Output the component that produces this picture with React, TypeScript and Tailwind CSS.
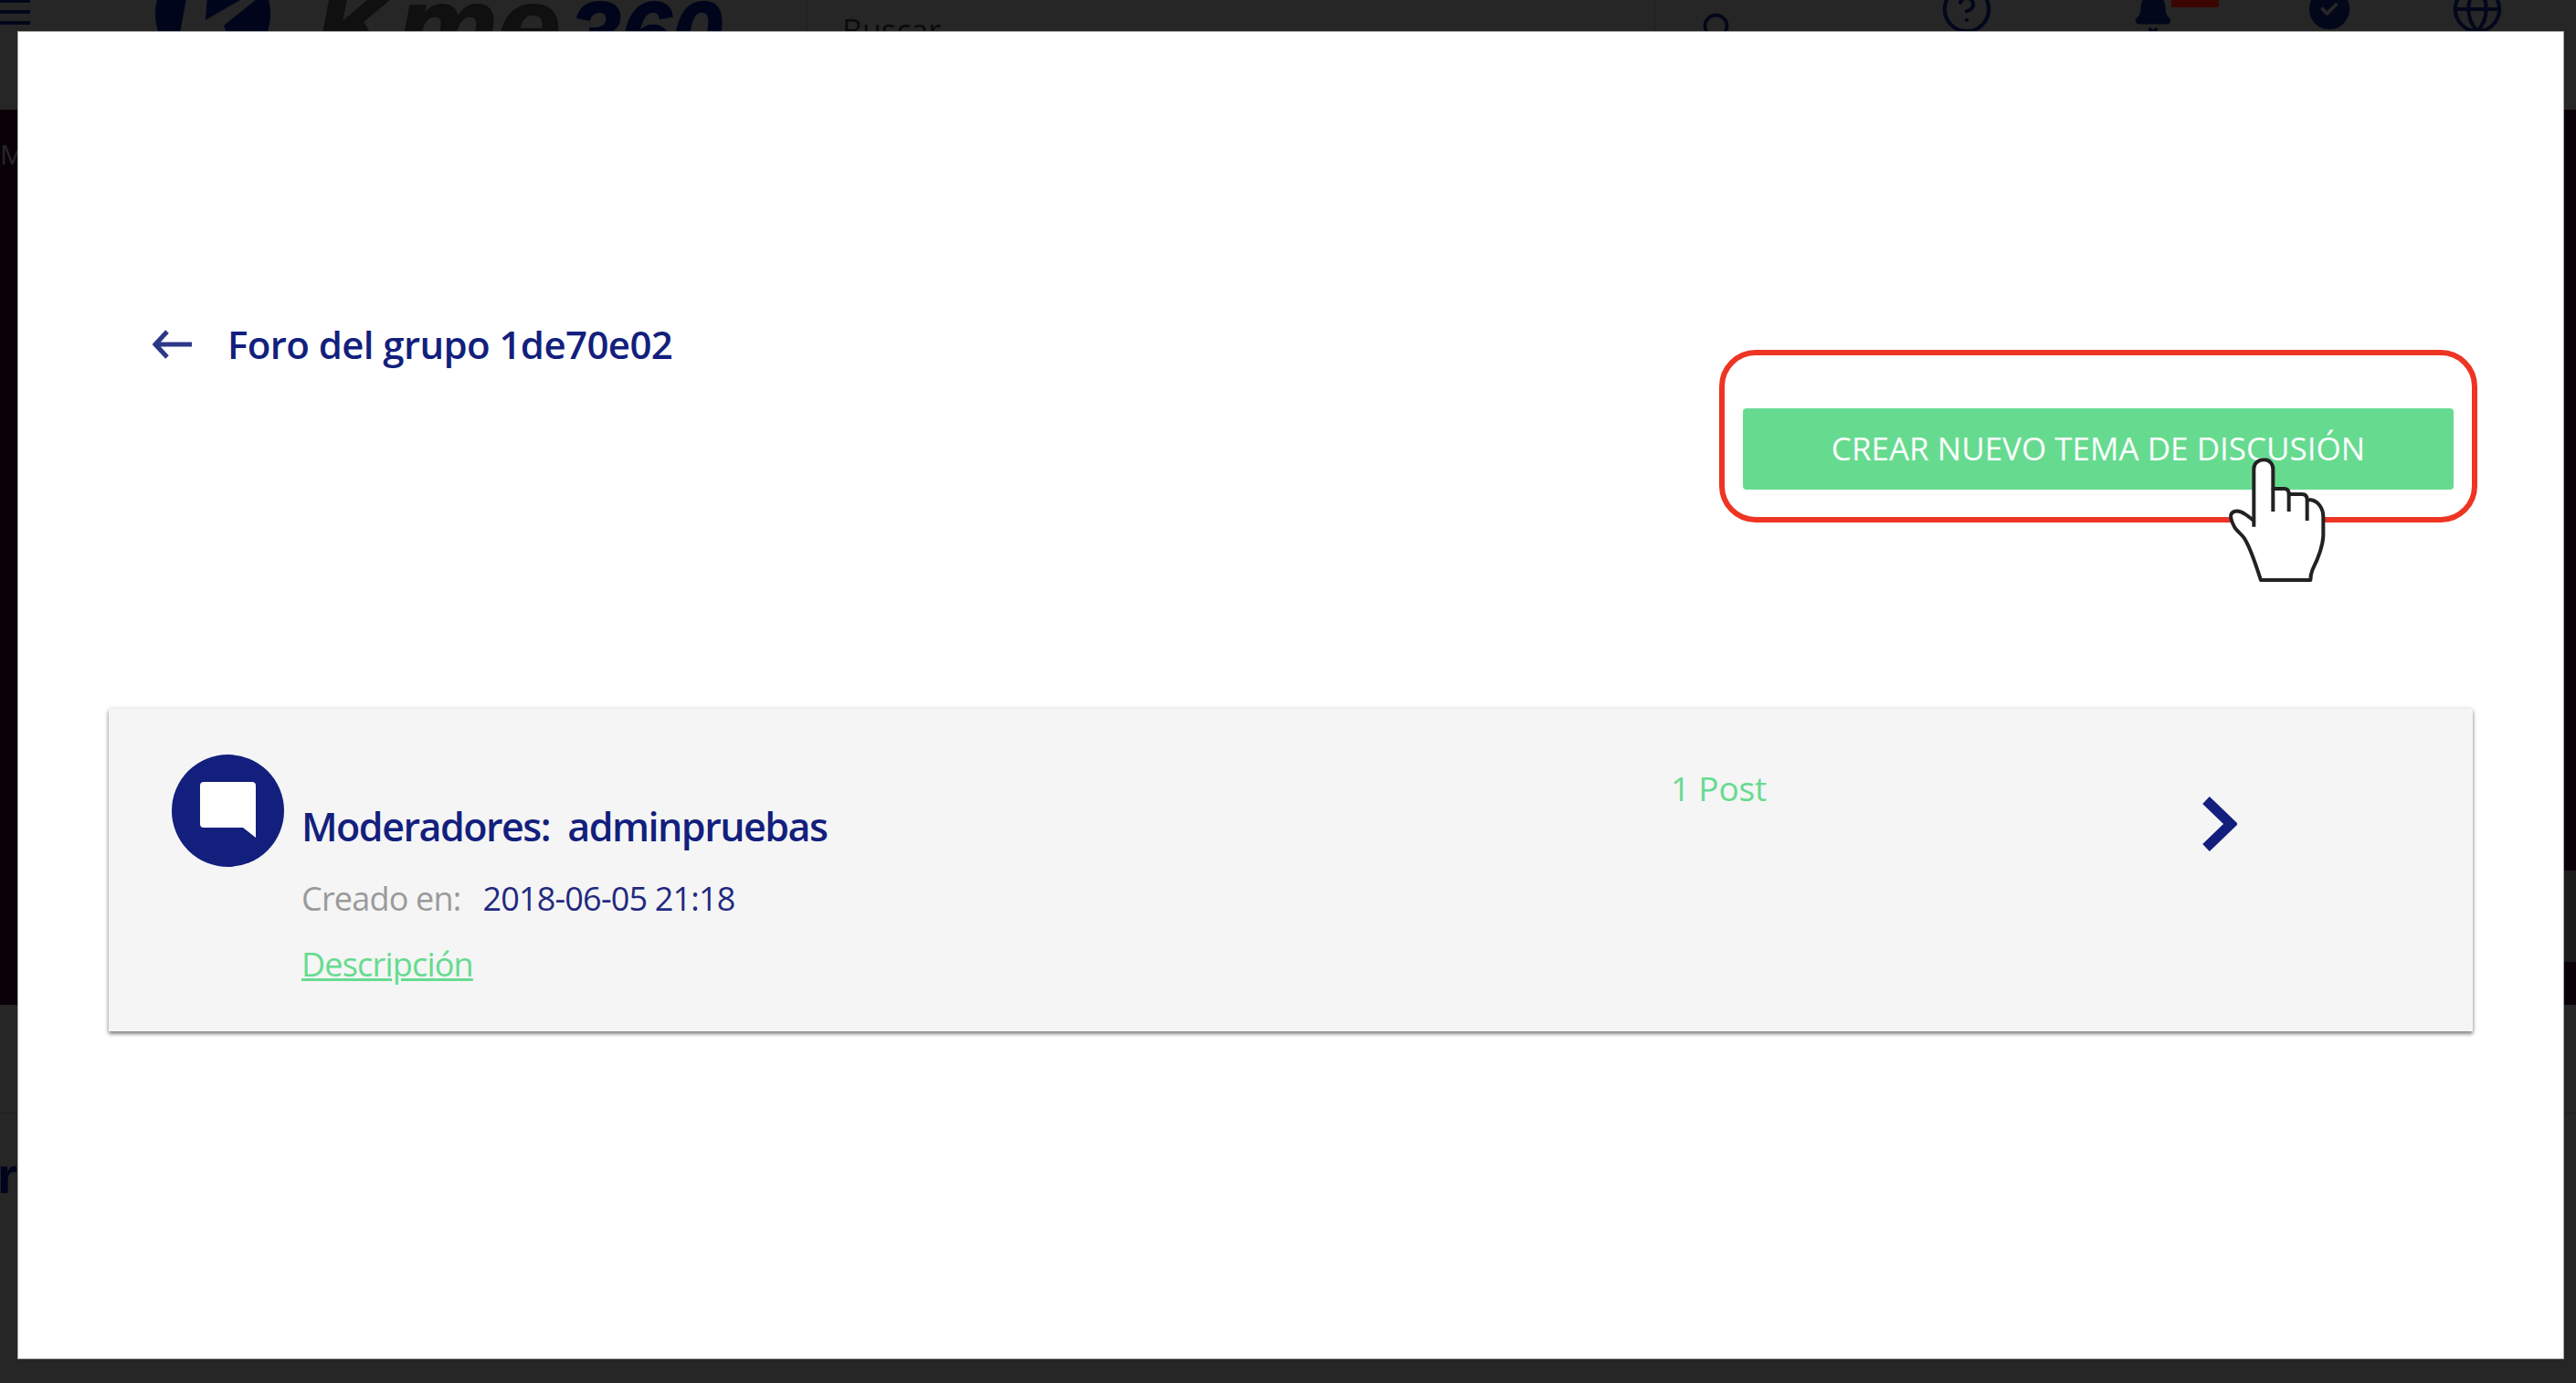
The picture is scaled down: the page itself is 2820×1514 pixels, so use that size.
import { Bell, CircleCheck, CircleHelp, Globe, Search } from "lucide-react";

const HandCursor = () => (
  <svg className="absolute left-[2380px] top-[480px] h-[170px] w-[200px]" viewBox="0 0 600 510" fill="none">
    <path
      d="M285 465 C270 420 255 370 235 335 C225 315 205 305 198 290 C190 275 184 262 187 250 C192 235 215 235 232 248 C245 256 255 265 262 270 L262 100 C262 80 278 70 295 70 C312 70 325 82 325 100 L325 165 L362 165 C372 165 377 172 377 183 L420 183 C432 183 437 190 437 202 L450 202 C472 206 490 228 490 258 L490 320 C488 360 470 400 455 430 C450 442 448 452 448 465 Z"
      fill="#ffffff"
      stroke="#222222"
      strokeWidth="12"
      strokeLinejoin="round"
    />
    <path d="M262 270 L262 290 M325 165 L325 240 M377 183 L377 240 M437 202 L437 270" stroke="#222222" strokeWidth="12" />
  </svg>
);

// page behind the modal, almost everything is covered
const Backdrop = () => (
  <div className="flex h-full flex-col bg-[#262626] text-[#03071a]">
    <header className="flex h-[120px] shrink-0 overflow-hidden">
      <div className="flex w-[170px] shrink-0 flex-col">
        <div className="flex w-[33px] flex-col gap-[8px]">
          <div className="h-[3px] bg-[#03071a]" />
          <div className="h-[4px] bg-[#03071a]" />
          <div className="h-[4px] bg-[#03071a]" />
        </div>
        <span className="mt-[12px] -ml-[18px] text-[30px] leading-none font-semibold">E</span>
      </div>
      <svg className="-mt-[48px] h-[126px] w-[126px] shrink-0" viewBox="0 0 126 126">
        <circle cx="63" cy="63" r="63" fill="#00051c" />
        <path d="M37 30 H58 L55 70 L124 30 H132 L75 76 L84 100 H24 Z" fill="#262626" />
      </svg>
      <div className="-mt-[33px] ml-[49px] w-[538px] shrink-0 text-[124px] leading-[124px] font-bold whitespace-nowrap italic [-webkit-text-stroke:2px] [font-family:'Liberation_Sans',sans-serif]">
        <span className="text-[#101010]">Kme</span>
        <span className="ml-[10px] text-[100px] text-[#00051c]">360</span>
      </div>
      <div className="flex w-[928px] shrink-0 border-l border-[#1d1d1d] pt-[16px] pl-[38px]">
        <span className="text-[34px] leading-none text-[#0a0a0a] [font-family:'Open_Sans',sans-serif]">Buscar</span>
      </div>
      <div className="flex flex-1 border-l border-[#1d1d1d] pl-[50px]">
        <Search className="mt-[12px] h-[36px] w-[36px]" strokeWidth={2.5} />
        <CircleHelp className="-mt-[19px] ml-[226px] h-[58px] w-[58px]" strokeWidth={1.7} />
        <div className="relative ml-[152px]">
          <Bell className="-mt-[8px] h-[46px] w-[46px]" fill="#03071a" strokeWidth={2} />
          <div className="absolute top-0 left-[43px] h-[8px] w-[52px] bg-[#3b0500]" />
        </div>
        <CircleCheck className="-mt-[19px] ml-[141px] h-[58px] w-[58px]" fill="#03071a" stroke="#262626" strokeWidth={1.7} />
        <Globe className="-mt-[19px] ml-[104px] h-[58px] w-[58px]" strokeWidth={1.7} />
      </div>
    </header>
    <div className="flex h-[980px] shrink-0 flex-col bg-[#0a0008]">
      <span className="mt-[34px] text-[30px] leading-none text-[#262626]">M</span>
      <div className="mt-[769px] h-[100px] self-end w-[14px] bg-[#1c1c1c]" />
    </div>
    <div className="flex flex-1 flex-col">
      <div className="mt-[118px] h-px bg-[#1f1f1f]" />
      <span className="mt-[40px] -ml-[3px] text-[56px] leading-none font-bold text-[#00051c] [font-family:'Liberation_Sans',sans-serif]">r</span>
    </div>
  </div>
);

const ForumCard = () => (
  <div className="mt-[204px] flex h-[353px] bg-[#f5f5f5] pt-[50px] pl-[69px] shadow-[0_3px_4px_rgba(0,0,0,0.45),0_0_5px_rgba(0,0,0,0.15)]">
    <div className="flex w-[1641px] shrink-0">
      <svg className="h-[123px] w-[123px] shrink-0" viewBox="0 0 123 123">
        <circle cx="61.5" cy="61.5" r="61.5" fill="#131f7d" />
        <path
          d="M35 30 H88 Q92 30 92 34 V91 L78 80 H35 Q31 80 31 76 V34 Q31 30 35 30 Z"
          fill="#ffffff"
        />
      </svg>
      <div className="ml-[19px] flex flex-col">
        <h2 className="mt-[50px] text-[43px] leading-[57px] font-semibold tracking-[-1.5px] whitespace-pre text-[#131f7d]">
          Moderadores:  adminpruebas
        </h2>
        <div className="mt-[27px] flex text-[36px] leading-[48px] tracking-[-0.8px]">
          <span className="text-[#9a9a9a]">Creado en:</span>
          <span className="ml-[24px] text-[#1f2a80]">2018-06-05 21:18</span>
        </div>
        <a className="mt-[24px] text-[36px] leading-[48px] tracking-[-0.8px] text-[#66db90] underline">Descripción</a>
      </div>
    </div>
    <span className="mt-[13px] w-[582px] shrink-0 text-[37px] leading-[48px] tracking-[-0.2px] text-[#66db90]">1 Post</span>
    <svg className="mt-[46px] h-[60px] w-[38px]" viewBox="0 0 38 60" fill="none">
      <path d="M4 4 L31 30 L4 56" stroke="#131f7d" strokeWidth="11" />
    </svg>
  </div>
);

export default function App() {
  return (
    <div className="relative h-[1514px] overflow-hidden [font-family:'Open_Sans',sans-serif]">
      <Backdrop />
      <div className="absolute top-[34px] left-[19px] h-[1454px] w-[2788px] border border-[#a8a8a8] bg-white px-[99px] pt-[315px]">
        <div className="flex items-start justify-between">
          <div className="-mt-[2px] ml-[48px] flex items-center">
            <svg className="h-[32px] w-[44px]" viewBox="0 0 44 32" fill="none">
              <path d="M43 16 H3 M16 2 L3 16 L16 30" stroke="#2c3888" strokeWidth="5" />
            </svg>
            <h1 className="ml-[38px] text-[42px] leading-[57px] font-semibold tracking-[-0.6px] text-[#131f7d]">Foro del grupo 1de70e02</h1>
          </div>
          <div className="mt-[33px] -mr-[5px] flex h-[189px] w-[830px] items-end rounded-[40px] border-[6px] border-[#ee3524] px-[20px] pb-[30px]">
            <button className="h-[89px] w-[779px] rounded-[4px] bg-[#66db90] text-[35px] text-white">
              CREAR NUEVO TEMA DE DISCUSIÓN
            </button>
          </div>
        </div>
        <ForumCard />
      </div>
      <HandCursor />
    </div>
  );
}
